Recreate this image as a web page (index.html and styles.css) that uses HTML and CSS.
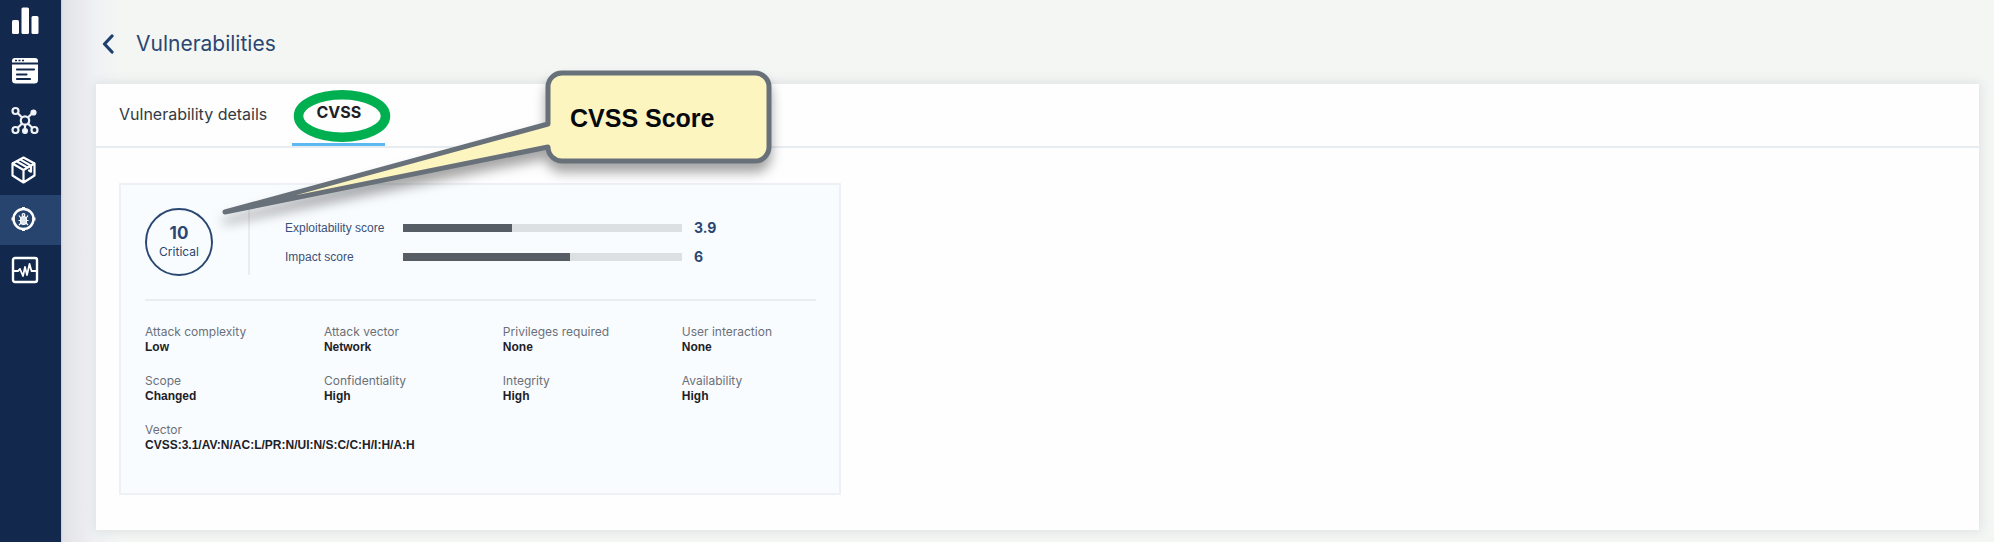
FILE: index.html
```html
<!DOCTYPE html>
<html lang="en">
<head>
<meta charset="utf-8">
<title>Vulnerabilities</title>
<link rel="stylesheet" href="styles.css">
</head>
<body>
<div class="app">
  <nav class="sidebar" aria-label="Main">
    <a class="nav-item" href="#" aria-label="Dashboard">
      <svg width="28" height="28" viewBox="0 0 28 28" fill="#fff"><rect x="1" y="14" width="7" height="14" rx="1.5"/><rect x="10.500" y="1.500" width="7.500" height="26.500" rx="1.500"/><rect x="20.500" y="10" width="7" height="18" rx="1.500"/></svg>
    </a>
    <a class="nav-item" href="#" aria-label="Applications">
      <svg width="28" height="28" viewBox="0 0 28 28"><path fill="#fff" d="M1 6.500V5a3 3 0 0 1 3-3h20a3 3 0 0 1 3 3v1.500zM1 8.500h26v15.500a3.500 3.500 0 0 1-3.500 3.500h-19A3.500 3.500 0 0 1 1 24z"/><path stroke="#12284c" stroke-width="2.200" stroke-linecap="round" d="M6 13.500h17M6 18.500h9.500M6 23h13"/><path stroke="#12284c" stroke-width="1.600" d="M4 4.500h2M7.500 4.500h2M11 4.500h2"/></svg>
    </a>
    <a class="nav-item" href="#" aria-label="Network">
      <svg width="28" height="28" viewBox="0 0 28 28" fill="none" stroke="#eef2f7" stroke-width="2.200"><circle cx="14" cy="14.500" r="4.200"/><circle cx="4.500" cy="5" r="3"/><circle cx="4.500" cy="24" r="3"/><circle cx="23.500" cy="24" r="3"/><path d="M6.800 7.300l4 4M6.800 21.700l4-4M21.200 21.700l-4-4M17.200 11.300l3.500-3.500M14 18.700v4"/><circle cx="22.500" cy="6.500" r="2" fill="#fff"/><circle cx="14" cy="25" r="2" fill="#fff"/></svg>
    </a>
    <a class="nav-item" href="#" aria-label="Packages">
      <svg width="28" height="28" viewBox="0 0 28 28" fill="none" stroke="#fff" stroke-width="2.200" stroke-linejoin="round" stroke-linecap="round"><path d="M12.500 1.500L23.500 7.500v12L12.500 26.500 1.500 19.500v-12zM1.500 7.500l11 6.500 11-6.500M12.500 14v12.500M5.500 5.300l11 6.300M9 3.400l11 6.300v6l-2-1.200"/></svg>
    </a>
    <a class="nav-item nav-item-active" href="#" aria-label="Vulnerabilities" aria-current="page">
      <svg width="28" height="28" viewBox="0 0 28 28" fill="none" stroke="#fff" stroke-width="2.400"><circle cx="12.500" cy="13" r="10"/><path stroke-width="3" d="M12.500 1v3M12.500 22v3M.5 13h3M21.500 13h3"/><rect x="9.500" y="10.500" width="6" height="8" rx="2.500" fill="#dfe8f2" stroke="#fff" stroke-width="1"/><circle cx="12.500" cy="9" r="1.300" stroke-width="1.200"/><path stroke-width="1.200" d="M9.800 12L8 9.500M15.200 12L17 9.500M9.800 14.500H7.500M15.200 14.500h2.300M10 17l-2 2M15 17l2 2"/></svg>
    </a>
    <a class="nav-item" href="#" aria-label="Monitoring">
      <svg width="28" height="28" viewBox="0 0 28 28" fill="none" stroke="#fff" stroke-width="2.400" stroke-linejoin="round"><rect x="2" y="2" width="24" height="24" rx="2"/><path stroke-width="1.800" d="M3 15h4l2-2 3 7 2-9 2 8 2.500-11 2 7H25"/></svg>
    </a>
  </nav>

  <main class="page">
    <header class="page-head">
      <a class="back" href="#" aria-label="Back"><svg width="12" height="20" viewBox="0 0 12 20" fill="none" stroke="#1f3d6d" stroke-width="3.200" stroke-linecap="round" stroke-linejoin="round"><path d="M10 2L2.500 10l7.500 8"/></svg></a>
      <h1 class="title">Vulnerabilities</h1>
    </header>

    <section class="card">
      <div class="tabs" role="tablist">
        <button class="tab" type="button" role="tab" aria-selected="false">Vulnerability details</button>
        <button class="tab tab-active" type="button" role="tab" aria-selected="true">CVSS
          <svg class="ring" width="98" height="54" viewBox="0 0 98 54" fill="none" stroke="#00b050" stroke-width="9.500"><ellipse cx="49" cy="27" rx="43.500" ry="21.200"/></svg>
        </button>
      </div>

      <div class="panel">
        <div class="summary">
          <div class="badge"><strong class="badge-score">10</strong><span class="badge-level">Critical</span></div>
          <div class="scores">
            <span class="score-label">Exploitability score</span>
            <div class="bar"><div class="bar-fill" style="width: 39%"></div></div>
            <strong class="score">3.9</strong>
            <span class="score-label">Impact score</span>
            <div class="bar"><div class="bar-fill" style="width: 60%"></div></div>
            <strong class="score">6</strong>
          </div>
        </div>
        <dl class="metrics">
          <div><dt>Attack complexity</dt><dd>Low</dd></div>
          <div><dt>Attack vector</dt><dd>Network</dd></div>
          <div><dt>Privileges required</dt><dd>None</dd></div>
          <div><dt>User interaction</dt><dd>None</dd></div>
          <div><dt>Scope</dt><dd>Changed</dd></div>
          <div><dt>Confidentiality</dt><dd>High</dd></div>
          <div><dt>Integrity</dt><dd>High</dd></div>
          <div><dt>Availability</dt><dd>High</dd></div>
          <div class="metric-wide"><dt>Vector</dt><dd>CVSS:3.1/AV:N/AC:L/PR:N/UI:N/S:C/C:H/I:H/A:H</dd></div>
        </dl>
      </div>

      <div class="callout">
        <svg class="callout-shape" width="560" height="160" viewBox="0 0 560 160"><path fill="#fdf5c0" stroke="#68707a" stroke-width="5" stroke-linejoin="round" d="M343 13H535A14 14 0 0 1 549 27V87A14 14 0 0 1 535 101H343A14 14 0 0 1 328 87L5 152 328 64V27A14 14 0 0 1 343 13Z"/></svg>
        <span class="callout-text">CVSS Score</span>
      </div>
    </section>
  </main>
</div>
</body>
</html>
```
FILE: styles.css
```css
* { box-sizing: border-box; }

body {
  margin: 0;
  font-family: Inter, "Liberation Sans", sans-serif;
  font-size: 12px;
  line-height: 16px;
  color: #1d2127;
  background: #f4f6f4;
}

.app {
  display: flex;
  min-height: 100vh;
  overflow: hidden;
}

.sidebar {
  flex: none;
  width: 61px;
  margin-top: -5px;
  background: #12284c;
}

.nav-item {
  display: flex;
  align-items: center;
  height: 50px;
  padding-left: 11px;
}

.nav-item-active { background: #27446f; }

.page {
  flex: 1;
  min-width: 0;
  padding: 28px 15px 12px 35px;
  background: linear-gradient(90deg, #c9ced8 0, #e2e3e6 2px, #e8e8ec 14px, #ececf0 24px, #eff1f4 34px, #f4f6f4 60px);
}

.page-head {
  display: flex;
  align-items: center;
  gap: 22px;
  height: 31px;
  margin-bottom: 25px;
  padding-left: 6px;
}

.back { display: flex; }

.title {
  margin: 0;
  font-size: 21px;
  line-height: 30px;
  font-weight: 400;
  color: #2c4672;
}

.card {
  position: relative;
  min-height: 446px;
  background: #fdfefd;
  box-shadow: 0 0 10px 2px #dfe2e4;
}

.tabs {
  display: flex;
  gap: 25px;
  height: 64px;
  padding-left: 23px;
  border-bottom: 2px solid #e6ecf0;
}

.tab {
  padding: 0;
  border: 0;
  border-bottom: 3px solid transparent;
  background: none;
  font: inherit;
  font-size: 16px;
  color: #343a42;
}

.tab-active {
  position: relative;
  width: 93px;
  padding-bottom: 3px;
  border-bottom-color: #5bb8f0;
  font-weight: 700;
  color: #1d2127;
}

.ring {
  position: absolute;
  top: 5px;
  left: 1px;
}

.panel {
  max-width: 722px;
  min-height: 312px;
  margin: 35px 23px 0;
  padding: 23px 23px 23px 24px;
  border: 2px solid #edf1f5;
  background: #f9fcff;
}

.summary {
  display: flex;
  align-items: center;
  padding-bottom: 23px;
  border-bottom: 2px solid #e9edf0;
}

.badge {
  display: flex;
  flex-direction: column;
  align-items: center;
  justify-content: center;
  width: 68px;
  height: 68px;
  margin-right: 35px;
  border: 2px solid #2a4772;
  border-radius: 50%;
  color: #2a4772;
}

.badge-score {
  font-size: 17px;
  line-height: 20px;
}

.badge-level { line-height: 18px; }

.scores {
  display: grid;
  flex: 1;
  grid-template-columns: 106px 279px auto;
  justify-content: start;
  align-content: center;
  align-items: center;
  gap: 13px 12px;
  height: 66px;
  padding-left: 35px;
  border-left: 2px solid #e9edf0;
  color: #3b5178;
}

.score-label {
  font-family: "Liberation Sans", Arial, sans-serif;
  white-space: nowrap;
}

.bar {
  height: 8px;
  background: #dce0e3;
}

.bar-fill {
  height: 100%;
  background: #575d65;
}

.score {
  font-size: 14px;
  color: #2a4772;
}

.metrics {
  display: grid;
  grid-template-columns: 4fr 4fr 4fr 3fr;
  row-gap: 18px;
  margin: 23px 0 0;
}

.metrics dt {
  line-height: 15px;
  color: #6b7078;
}

.metrics dd {
  margin: 0;
  font-family: "Liberation Sans", Arial, sans-serif;
  font-weight: 700;
}

.metric-wide { grid-column: 1 / -1; }

.callout {
  position: absolute;
  top: -24px;
  left: 124px;
}

.callout-shape {
  display: block;
  overflow: visible;
  filter: drop-shadow(0 9px 6px rgba(0, 0, 0, 0.35));
}

.callout-text {
  position: absolute;
  top: 43px;
  left: 350px;
  font: 700 25px/30px "Liberation Sans", Arial, sans-serif;
  color: #05080d;
  white-space: nowrap;
}
```
